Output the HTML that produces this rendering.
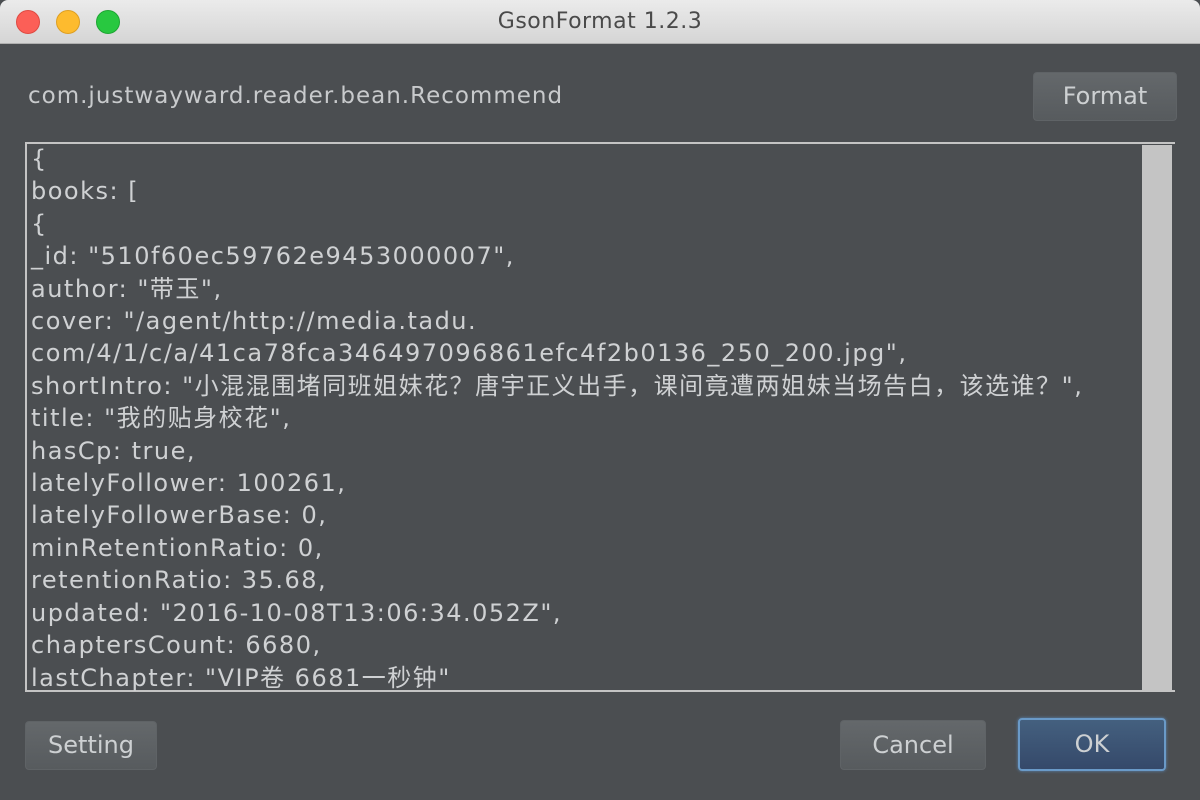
<!DOCTYPE html>
<html><head><meta charset="utf-8"><style>
*{margin:0;padding:0;box-sizing:border-box}
body{width:1200px;height:800px;background:#4b4e51;font-family:"DejaVu Sans","Noto Sans CJK SC",sans-serif;position:relative;overflow:hidden;color:#c9ccce}
.tb{position:absolute;left:0;top:0;width:1200px;height:44px;background:linear-gradient(#ebebeb,#d5d5d5);border-bottom:1px solid #b0b0b0;border-radius:8px 8px 0 0}
.tb .t{position:absolute;left:0;right:0;top:9px;text-align:center;font-size:22px;color:#4a4a4a;letter-spacing:0.5px}
.d{position:absolute;top:10px;width:24px;height:24px;border-radius:50%}
.pk{position:absolute;left:28px;top:83px;font-size:23px;color:#c8cacc;letter-spacing:1px}
.btn{position:absolute;border:1px solid #5f6366;border-radius:4px;background:linear-gradient(#64686b,#575b5e);font-size:24px;text-align:center;color:#cdd0d2}
.ta{position:absolute;left:25px;top:142px;width:1150px;height:550px;border:2px solid #c4c4c4;border-right:none;background:#4b4e51}
.sb{position:absolute;left:1142px;top:145px;width:30px;height:545px;background:#c4c4c4}
.txt{position:absolute;left:31px;top:143px;font-size:24px;line-height:32.4px;white-space:pre;color:#cfd1d3;letter-spacing:1.5px}
</style></head><body>
<div class="tb"><div class="d" style="left:16px;background:#fc5f57;border:1px solid #df4a42"></div><div class="d" style="left:56px;background:#fdbb2e;border:1px solid #de9f22"></div><div class="d" style="left:96px;background:#28c840;border:1px solid #1ea633"></div><div class="t">GsonFormat 1.2.3</div></div>
<div class="pk">com.justwayward.reader.bean.Recommend</div>
<div class="btn" style="left:1033px;top:72px;width:144px;height:49px;line-height:47px">Format</div>
<div class="ta"></div><div class="sb"></div>
<div class="txt">{
books: [
{
_id: "510f60ec59762e9453000007",
author: "带玉",
cover: "/agent/http://media.tadu.
com/4/1/c/a/41ca78fca346497096861efc4f2b0136_250_200.jpg",
shortIntro: "小混混围堵同班姐妹花？唐宇正义出手，课间竟遭两姐妹当场告白，该选谁？",
title: "我的贴身校花",
hasCp: true,
latelyFollower: 100261,
latelyFollowerBase: 0,
minRetentionRatio: 0,
retentionRatio: 35.68,
updated: "2016-10-08T13:06:34.052Z",
chaptersCount: 6680,
lastChapter: "VIP卷 6681一秒钟"</div>
<div class="btn" style="left:25px;top:721px;width:132px;height:49px;line-height:47px">Setting</div>
<div class="btn" style="left:840px;top:720px;width:146px;height:50px;line-height:48px">Cancel</div>
<div class="btn" style="left:1018px;top:718px;width:148px;height:53px;line-height:49px;background:linear-gradient(#44607f,#35496a);border:2px solid #6a9ac8;box-shadow:0 0 3px #5b86b5">OK</div>
</body></html>
